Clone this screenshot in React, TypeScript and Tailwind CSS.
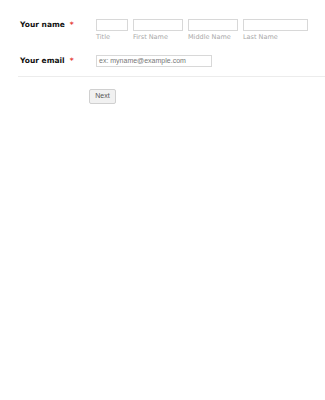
export default function App() {
  const sub = "text-[6.5px] text-[#a8a8a8] mt-[2px] leading-[8px]";
  const box = "h-[12px] border border-[#d8d8d8] bg-white";
  return (
    <div className="w-[325px] h-[400px] bg-white" style={{ fontFamily: '"DejaVu Sans", Verdana, sans-serif' }}>
      <div className="pt-[19px] pl-[20px] flex">
        <div className="w-[76px] pt-[1px] text-[7.5px] font-bold text-[#111] leading-[10px] flex">
          <span>Your name</span>
          <span className="text-[#e53935] ml-[5px]">*</span>
        </div>
        <div className="flex gap-[5px]">
          <div className="flex flex-col">
            <div className={`${box} w-[32px]`} />
            <div className={sub}>Title</div>
          </div>
          <div className="flex flex-col">
            <div className={`${box} w-[50px]`} />
            <div className={sub}>First Name</div>
          </div>
          <div className="flex flex-col">
            <div className={`${box} w-[50px]`} />
            <div className={sub}>Middle Name</div>
          </div>
          <div className="flex flex-col">
            <div className={`${box} w-[65px]`} />
            <div className={sub}>Last Name</div>
          </div>
        </div>
      </div>
      <div className="pt-[14px] pl-[20px] flex">
        <div className="w-[76px] pt-[1px] text-[7.5px] font-bold text-[#111] leading-[10px] flex">
          <span>Your email</span>
          <span className="text-[#e53935] ml-[5px]">*</span>
        </div>
        <div className="w-[116px] h-[12px] border border-[#d8d8d8] flex items-center pl-[2px] text-[7px] text-[#777]" style={{ fontFamily: '"Liberation Sans", Arial, sans-serif' }}>
          ex: myname@example.com
        </div>
      </div>
      <div className="mt-[9px] ml-[18px] border-t border-[#ececec]" />
      <div className="pt-[12px] pl-[89px]">
        <div className="w-[27px] h-[15px] border border-[#d0d0d0] rounded-[2px] bg-[#f1f1f1] flex items-center justify-center text-[7px] text-[#555]" style={{ fontFamily: '"Liberation Sans", Arial, sans-serif' }}>
          Next
        </div>
      </div>
    </div>
  );
}
